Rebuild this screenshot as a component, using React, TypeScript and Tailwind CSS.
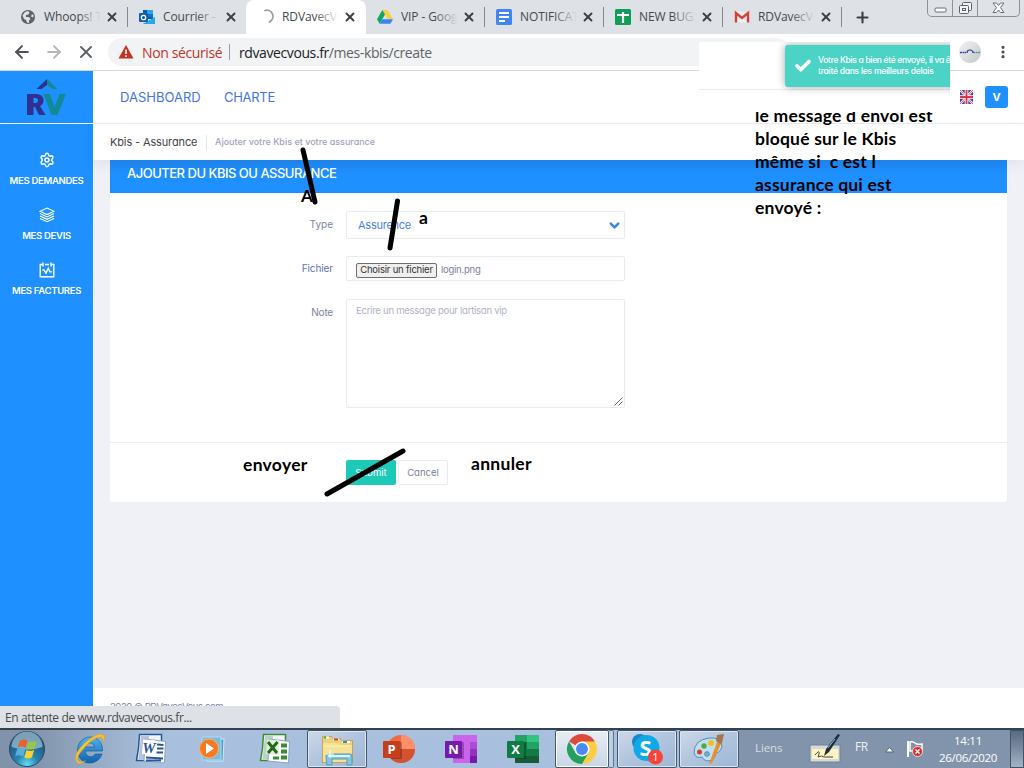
import React from "react";
import { Settings, X, Plus, ArrowLeft, ArrowRight, Check, ChevronDown, MoreVertical } from "lucide-react";

const GlobeIcon = () => (
  <svg width="16" height="16" viewBox="0 0 16 16">
    <circle cx="8" cy="8" r="7" fill="#5f6368" />
    <path d="M2.500 6.500 5 3l3-1 1.500 1.500-1 2L6 6v2h3l1.500 2-1.500 1.500V14l-2-.5-1-2.500-2-1zM12 5l1.700 1.500-.7 2-2-1z" fill="#dee1e6" />
  </svg>
);
const OutlookIcon = () => (
  <svg width="16" height="16" viewBox="0 0 16 16">
    <path d="M4 1h10v9H4z" fill="#0a5aa8" />
    <path d="M8 1h6v4H8z" fill="#28a8ea" />
    <path d="M9 5h5v3H9z" fill="#0078d4" />
    <path d="M4 15h12V8l-6 4z" fill="#1490df" />
    <path d="m4 15 12-7v7z" fill="#28a8ea" />
    <rect x="0" y="4" width="9" height="9" rx="1" fill="#0f5fb5" />
    <circle cx="4.5" cy="8.5" r="2.2" fill="none" stroke="#fff" strokeWidth="1.3" />
  </svg>
);
const SpinnerIcon = () => (
  <svg width="16" height="16" viewBox="0 0 16 16">
    <path d="M7 1.5A6.2 6.2 0 0 1 11.500 13" fill="none" stroke="#9aa0a6" strokeWidth="1.8" strokeLinecap="round" />
  </svg>
);
const DriveIcon = () => (
  <svg width="16" height="16" viewBox="0 0 16 16">
    <path d="M5.3 1h5.2L16 10.3h-5.2z" fill="#ffcd40" />
    <path d="M5.3 1 0 10.2l2.6 4.5L8 5.6z" fill="#11a861" />
    <path d="M5.2 10.3H16l-2.6 4.5H2.6z" fill="#3e82f1" />
  </svg>
);
const DocsIcon = () => (
  <svg width="16" height="16" viewBox="0 0 16 16">
    <rect width="16" height="16" rx="1.5" fill="#4285f4" />
    <path d="M3 4h10M3 8h10M3 12h6" stroke="#fff" strokeWidth="1.900" />
  </svg>
);
const SheetsIcon = () => (
  <svg width="16" height="16" viewBox="0 0 16 16">
    <rect width="16" height="16" rx="1.5" fill="#0f9d58" />
    <path d="M2 6h12M8 3v11" stroke="#fff" strokeWidth="2.2" />
  </svg>
);
const GmailIcon = () => (
  <svg width="16" height="16" viewBox="0 0 16 16">
    <rect x="1" y="2.5" width="14" height="11" rx="1" fill="#eceff1" />
    <path d="M2 13.5V4l6 5 6-5v9.5" fill="none" stroke="#d93f33" strokeWidth="2.4" />
  </svg>
);

type TabData = { icon: React.ReactNode; title: string; active?: boolean; sep?: boolean };
const tabs: TabData[] = [
  { icon: <GlobeIcon />, title: "Whoops! T", sep: true },
  { icon: <OutlookIcon />, title: "Courrier - d" },
  { icon: <SpinnerIcon />, title: "RDVavecVo", active: true },
  { icon: <DriveIcon />, title: "VIP - Goog", sep: true },
  { icon: <DocsIcon />, title: "NOTIFICATI", sep: true },
  { icon: <SheetsIcon />, title: "NEW BUGS", sep: true },
  { icon: <GmailIcon />, title: "RDVavecVo", sep: true },
];

function Tab({ icon, title, active, sep }: TabData) {
  const tone = active ? "mr-[-1px] w-[120px] bg-white rounded-t-lg" : "w-[119px]";
  const fade = active ? "to-white" : "to-[#dee1e6]";
  return (
    <div className={`flex h-[34px] shrink-0 items-center pl-3 ${tone}`}>
      <span className="w-6 shrink-0">{icon}</span>
      <span className="relative w-[57px] shrink-0 overflow-hidden text-[12px] tracking-[-0.1px] whitespace-nowrap text-[#45494d]">
        {title}
        <span className={`absolute inset-y-0 right-0 w-6 bg-linear-to-r from-transparent ${fade}`} />
      </span>
      <X className="ml-[4px] h-[14px] w-[14px] shrink-0 text-[#3c4043]" strokeWidth={3.2} />
      <span className={`mr-[-1px] ml-auto h-5 w-px ${sep ? "bg-[#85898e]" : ""}`} />
    </div>
  );
}

function WindowButtons() {
  return (
    <div className="absolute top-0 left-[927px] flex h-[17px] w-[93px] rounded-b-[5px] border border-t-0 border-[#8d9197] bg-[#dfe2e7]">
      <div className="flex w-[25px] items-center justify-center border-r border-[#8d9197]">
        <svg width="13" height="17"><rect x="1" y="8" width="11" height="4" rx="1" fill="#fff" stroke="#6b6f75" /></svg>
      </div>
      <div className="flex w-[25px] items-center justify-center border-r border-[#8d9197]">
        <svg width="15" height="17" fill="#f4f5f7" stroke="#5c6066">
          <rect x="4.5" y="2.5" width="9" height="8" rx="1" />
          <rect x="1.5" y="5.5" width="9" height="8" rx="1" />
          <rect x="4.5" y="8.5" width="3" height="2" />
        </svg>
      </div>
      <div className="flex flex-1 items-center justify-center">
        <svg width="13" height="17" viewBox="0 0 13 17">
          <path d="M1 3h3.5l2 2.5 2-2.5H12L8.5 7.7 12 12.5H8.500l-2-2.500-2 2.500H1l3.500-4.800z" fill="#fff" stroke="#6b6f75" />
        </svg>
      </div>
    </div>
  );
}

function Toolbar() {
  return (
    <div className="flex h-[37px] shrink-0 items-center border-b border-[#d5d7da] bg-white text-[#5f6368]">
      <ArrowLeft className="ml-[12px] h-5 w-5 text-[#4f5358]" strokeWidth={2.4} />
      <ArrowRight className="ml-[12px] h-5 w-5 text-[#b4b7ba]" strokeWidth={2.4} />
      <X className="ml-[12px] h-5 w-5 text-[#5f6368]" strokeWidth={2.3} />
      <div className="ml-[12px] flex h-7 w-[682px] items-center rounded-full bg-[#f1f3f4] pl-[10px] text-[14px] whitespace-nowrap">
        <svg width="16" height="14" viewBox="0 0 16 14">
          <path d="M8 0 15.500 13.500H.5z" fill="#c5321f" />
          <path d="M8 4.500v4.500M8 10.300v1.700" stroke="#fff" strokeWidth="1.600" />
        </svg>
        <span className="ml-[8px] w-[80px] tracking-[-0.38px] text-[#c5352b]">Non sécurisé</span>
        <span className="ml-[7px] h-4 w-px bg-[#9a9da1]" />
        <span className="ml-[9px] tracking-[-0.4px]"><span className="text-[#202124]">rdvavecvous.fr</span>/mes-kbis/create</span>
      </div>
      <div className="ml-auto flex h-[22px] w-[22px] items-center justify-center rounded-full bg-linear-to-br from-[#f3f3f4] to-[#c5c6c9]">
        <svg width="20" height="8"><path d="M0 4.500h6" stroke="#3f479b" strokeWidth="1.500" strokeDasharray="2 .5" /><path d="M13 4.500h7" stroke="#4a9caa" strokeWidth="1.500" strokeDasharray="2 .5" /><path d="M7 5q0-3 3-3t3 3" fill="none" stroke="#3a3f95" strokeWidth="1.200" /></svg>
      </div>
      <MoreVertical className="mr-[12px] ml-[13px] h-[16px] w-[18px] text-[#45494d]" strokeWidth={2.800} />
    </div>
  );
}

const Layers = () => (
  <svg width="16" height="16" viewBox="0 0 16 16" fill="none" stroke="#fff" strokeWidth="1.100">
    <path d="M8 1 15 4.300 8 7.600 1 4.300z" /><path d="m1 6.600 7 3.300 7-3.300M1 9l7 3.300L15 9M1 11.400l7 3.300 7-3.300" />
  </svg>
);
const Chart = () => (
  <svg width="16" height="16" viewBox="0 0 16 16" fill="none" stroke="#fff" strokeWidth="1.400">
    <path d="M4 2.500H1.200v12.300h13.600V2.500H12M6 2.500h4M4 .5v4M12 .5v4M3.500 8H5l2 3.300 2.300-5 1.500 3.500h2" />
  </svg>
);
const menu = [
  { icon: <Settings className="h-4 w-4" strokeWidth={2.2} />, label: "MES DEMANDES" },
  { icon: <Layers />, label: "MES DEVIS" },
  { icon: <Chart />, label: "MES FACTURES" },
];

function Sidebar() {
  return (
    <aside className="w-[93px] shrink-0 bg-[#1e90ff] text-white">
      <div className="flex h-[53px] items-center justify-center border-b border-[#e8f3ff]">
        <svg width="42" height="40" viewBox="0 0 42 40">
          <path d="M21 2v6L15.500 12H10.500z" fill="#2e3192" />
          <path d="M21 2v6L26.500 12h5z" fill="#128a96" />
          <path fillRule="evenodd" d="M1 17h9q7.500 0 7.500 6.500 0 4-3.500 5.500l5.500 9H13l-4-8H7.500v8H1zM7.500 21v5H9.500q2.500 0 2.500-2.500T9.500 21z" fill="#2e3192" />
          <path d="M17.500 17H24l4.500 13L33.500 17h6.500l-8.500 21h-6z" fill="#128a96" />
        </svg>
      </div>
      <nav className="flex flex-col gap-[17px] pt-[28px]">
        {menu.map((m) => (
          <div key={m.label} className="flex h-[38px] flex-col items-center gap-[5px]">
            {m.icon}
            <span className="text-[9.500px] leading-[15px] font-semibold tracking-[-0.3px] whitespace-nowrap">{m.label}</span>
          </div>
        ))}
      </nav>
    </aside>
  );
}

function FormCard() {
  return (
    <section className="mx-[17px] h-[342px] rounded-b-[3px] bg-white text-[10px] text-[#7b829f]">
      <h1 className="flex h-[33px] items-center bg-linear-to-b from-[#1c87f0] to-[#1e90ff] to-40% pb-[6px] pl-[17px] text-[13px] font-medium tracking-[-0.5px] text-white">
        AJOUTER DU KBIS OU ASSURANCE
      </h1>
      <div className="grid h-[250px] grid-cols-[223px_279px] content-start gap-x-[13px] border-b border-[#ebedf2] pt-[18px]">
        <label className="pt-[6px] text-right">Type</label>
        <div className="mb-[17px] flex h-[28px] items-center justify-between rounded-[2px] border border-[#e9eaf2] pr-[2px] pl-[11px] text-[11px] tracking-[-0.25px] text-[#4a7ff2]">
          Assurence
          <ChevronDown className="h-[15px] w-[15px] text-[#3c80f2]" strokeWidth={4} />
        </div>
        <label className="pt-[5px] text-right tracking-[-0.1px] text-[#5f74b5]">Fichier</label>
        <div className="mb-[18px] flex h-[25px] items-center rounded-[2px] border border-[#e9eaf2] pt-[3px] pl-[9px] text-[9.500px]">
          <button className="mr-[4px] h-[15px] w-[81px] rounded-[2px] border border-[#6f6f6f] bg-[#efefef] leading-[12px] tracking-[-0.2px] whitespace-nowrap text-[#333]">Choisir un fichier</button>
          <span className="tracking-[-0.25px]">login.png</span>
        </div>
        <label className="pt-[6px] text-right tracking-[-0.2px]">Note</label>
        <div className="relative h-[109px] rounded-[2px] border border-[#e9eaf2] pt-[4px] pl-[9px] text-[9.500px] tracking-[-0.250px] text-[#b0b2c8]">
          Ecrire un message pour lartisan vip
          <svg className="absolute right-[1px] bottom-[1px]" width="9" height="9" stroke="#666"><path d="M.5 8.500l8-8M4.500 8.500l4-4" /></svg>
        </div>
      </div>
      <div className="flex gap-[2px] pt-[17px] pl-[236px]">
        <button className="h-[25px] w-[50px] rounded-[2px] bg-[#1dc9b7] pt-px text-[9.500px] text-white">Submit</button>
        <button className="h-[25px] w-[50px] rounded-[2px] border border-[#e9eaf2] pt-px text-[9.500px] text-[#7b829f]">Cancel</button>
      </div>
    </section>
  );
}

const Flag = () => (
  <svg width="13" height="14" viewBox="0 0 13 14">
    <rect width="13" height="14" rx="1.500" fill="#3a4796" />
    <path d="M0 0l13 14M13 0 0 14" stroke="#fff" strokeWidth="2.200" /><path d="M0 0l13 14M13 0 0 14" stroke="#e2405a" strokeWidth=".9" />
    <path d="M6.500 0v14M0 7h13" stroke="#fff" strokeWidth="3.600" /><path d="M6.500 0v14M0 7h13" stroke="#e2314a" strokeWidth="1.900" />
  </svg>
);

function OfficeIcon({ letter, dark, mid, light, round }: { letter: string; dark: string; mid: string; light: string; round?: boolean }) {
  return (
    <svg width="34" height="30" viewBox="0 0 34 30">
      {round ? (
        <><circle cx="19" cy="15" r="14" fill={mid} /><path d="M19 1a14 14 0 0 1 14 14H19z" fill={light} /><path d="M5 15h28a14 14 0 0 1-28 0z" fill="#d35230" /></>
      ) : (
        <>
          <path d="M9 1h24v28H9z" fill={mid} />
          {letter === "N" ? (
            <><path d="M26 8h7v7h-7z" fill="#ae4bd5" /><path d="M26 15h7v7h-7z" fill="#9332bf" /><path d="M26 22h7v7h-7z" fill="#7719aa" /></>
          ) : (
            <><path d="M21 1h12v7H21z" fill={light} /><path d="M21 8h12v7H21z" fill="#21a366" /><path d="M9 8h12v7H9z" fill="#107c41" /><path d="M9 15h24v7H9z" fill="#107c41" /><path d="M9 22h24v7H9z" fill="#185c37" /></>
          )}
        </>
      )}
      <path d="M9 8h11v17H9z" fill="#000" opacity=".25" />
      <rect x="1" y="7" width="17" height="17" rx="1" fill={dark} />
      <text x="9.500" y="20" textAnchor="middle" fontSize="13" fontWeight="700" fill="#fff" fontFamily="Open Sans, sans-serif">{letter}</text>
    </svg>
  );
}

const StartOrb = () => (
  <svg width="38" height="38" viewBox="0 0 38 38">
    <defs><radialGradient id="orb" cx=".5" cy=".95" r=".8"><stop offset="0" stopColor="#5fe3f5" /><stop offset=".4" stopColor="#2783ae" /><stop offset="1" stopColor="#235277" /></radialGradient></defs>
    <circle cx="19" cy="19" r="17.500" fill="url(#orb)" stroke="#234966" />
    <path d="M3.500 17A15.500 15.500 0 0 1 34.500 17Q19 22 3.500 17z" fill="#d8edf8" opacity=".5" />
    <path d="M12 10.500q3.500-2 7.500.2l-2 7.300q-4-2.500-8-.5z" fill="#e8622c" /><path d="M20.700 11.200q4 2 8-.4l-2.200 7.500q-4 2.500-7.800.2z" fill="#9bc645" />
    <path d="M9.200 18.900q4-2 8 .5l-2 7.200q-4-2.500-8-.5z" fill="#5aaede" /><path d="M18.400 19.900q4 2.300 7.800-.1L24 27.200q-4 2.500-7.800.1z" fill="#fbd035" />
  </svg>
);
const IeIcon = () => (
  <svg width="34" height="32" viewBox="0 0 34 32">
    <defs><linearGradient id="ie" x2="0" y2="1"><stop stopColor="#4fb4ee" /><stop offset="1" stopColor="#1161ab" /></linearGradient></defs>
    <path fillRule="evenodd" d="M17 4c8 0 13 6 12.500 14H12.500c0 7 8 7 9.500 3h7c-2 6-7 9-12.500 9C9 30 4.500 24 4.500 17S10 4 17 4zm-4.500 10h9c-.5-5.500-8-5.500-9 0z" fill="url(#ie)" stroke="#0e5595" strokeWidth=".6" />
    <path d="M4.500 30Q-2 23 12 9.500 27-2.500 31 2.500q2 2.500-1 7.500 1-5.500-2.500-6Q21 4 11.500 14.500 1 26 6 28.500q2.500 1 7-1-5.500 4.500-8.500 2.500z" fill="#f5c32b" stroke="#d79a16" strokeWidth=".4" />
  </svg>
);
const OldOffice = ({ letter, color }: { letter: string; color: string }) => (
  <svg width="32" height="32" viewBox="0 0 32 32">
    <path d="M4.500 1.500h22v26H1.500q2.500-12 3-26z" fill="#eef4fa" stroke={color} strokeWidth="1.500" />
    <path d="M6 3h8l-2 23H3.500z" fill={color} opacity=".3" />
    <path d="m10 6 20.500 2.500-1 21.500L9 28z" fill="#fff" stroke="#8da6c1" />
    {letter === "X" ? (
      <path d="M22 10.500h6v4h-6zM22 16.500h6v4h-6zM22 22.500h6v4h-6zM14 23.500h6v3h-6z" fill={color} />
    ) : (
      <path d="M22 11.500l6.500.5M22 15.500h6.500M21.500 19.500H28M11 24.500l17 1M11 27.500h15" stroke={color} strokeWidth="1.800" />
    )}
    <path d="m8 6.500 12.500 1-.5 14.500-13-1z" fill={letter === "W" ? "#fff" : "#dff0d8"} />
    {letter === "X" ? (
      <path d="m9 9 9 11M18.500 9 9 20" stroke="#23691f" strokeWidth="3" />
    ) : (
      <text x="14" y="20" textAnchor="middle" fontSize="15" fontStyle="italic" fontWeight="700" fill={color} fontFamily="Liberation Serif, serif">{letter}</text>
    )}
  </svg>
);
const MediaIcon = () => (
  <svg width="30" height="30" viewBox="0 0 30 30">
    <path d="M10 5h17l-1 22H10z" fill="#4d9dcc" stroke="#d3ebf8" /><path d="M5 3h19v23H5z" fill="#79bde0" stroke="#b3dcf2" />
    <circle cx="12" cy="14.500" r="9.500" fill="#f47920" stroke="#ffb271" /><path d="m9 9 8 5.500L9 20z" fill="#fff" />
  </svg>
);
const FolderIcon = () => (
  <svg width="36" height="34" viewBox="0 0 36 34">
    <path d="M3.500 4.500h9l1 2h8l1 2h11v22h-30z" fill="#ecd27b" stroke="#c09d43" strokeWidth=".8" />
    <path d="M5 5.500h5M14 7.500h6M23 10h8" stroke="#fff8e6" strokeWidth="2" />
    <path d="M5 5.500h2" stroke="#21a83a" strokeWidth="2" /><path d="M15 7.500h4" stroke="#c9432b" strokeWidth="2" /><path d="M24 10h4" stroke="#2992ca" strokeWidth="2" />
    <path d="M4 11h16l1 2h12v17H4z" fill="#f6e294" /><path d="M5 14h26" stroke="#fdf1bd" />
    <path d="M8 22h23q2 0 2 2v9h-5v-6H13v6H8q-1-5-1-9z" fill="#86c5df" stroke="#4d9fbe" /><path d="M9 23h22v2H9z" fill="#dcf5fd" />
    <path d="M11 18v8M7 22h8" stroke="#fff" strokeWidth="1" />
  </svg>
);
const ChromeIcon = () => (
  <svg width="32" height="32" viewBox="0 0 32 32">
    <path d="M16 16 3 8.500A15 15 0 0 1 29 8.500z" fill="#dc4a3e" /><path d="M16 8.500h13A15 15 0 0 1 16 31l6.500-11.300z" fill="#ffcd41" />
    <path d="M3 8.500A15 15 0 0 0 16 31l6.500-11.300-13 0z" fill="#22a05c" /><circle cx="16" cy="16" r="7.500" fill="#fff" /><circle cx="16" cy="16" r="6" fill="#4a8af4" />
  </svg>
);
const SkypeIcon = () => (
  <svg width="34" height="34" viewBox="0 0 34 34">
    <circle cx="10" cy="10" r="8" fill="#1a86c8" /><circle cx="22" cy="22" r="8" fill="#078cd0" /><circle cx="16.500" cy="16" r="13" fill="#10a9e7" />
    <text x="15.500" y="24" textAnchor="middle" fontSize="22" fontWeight="700" fill="#fff" fontFamily="Open Sans, sans-serif">S</text>
    <circle cx="25.500" cy="25" r="7.500" fill="#f6443a" /><text x="25.500" y="29" textAnchor="middle" fontSize="11" fill="#fff" fontFamily="Open Sans, sans-serif">1</text>
  </svg>
);
const PaintIcon = () => (
  <svg width="34" height="34" viewBox="0 0 34 34">
    <path d="M2 21Q2 8 17 6q12-1 13 8-1 6-6 7-1 8-9 8-4-1-5-4-6 2-8-4z" fill="#c0dff1" stroke="#4a8fb8" />
    <circle cx="7.500" cy="20" r="2.500" fill="#d63c33" /><circle cx="12" cy="14" r="2.700" fill="#54a83c" /><circle cx="19" cy="11" r="3" fill="#f6bc21" /><circle cx="15" cy="22" r="2.300" fill="#84b0d0" stroke="#4788b3" />
    <path d="m17 32 8-22 4 2-9 19z" fill="#ed8e2d" /><path d="m24 9 1-6 7-1-2 9-2 1z" fill="#a5754d" />
  </svg>
);
const openCell = "border border-[#46586e] bg-linear-to-br from-[#cdd9e8] via-[#b0c4de] to-[#9eb7d6] shadow-[inset_0_0_0_1px_#dbe5f1] rounded-[2px]";

function Taskbar() {
  return (
    <footer className="flex h-10 shrink-0 items-center border-t-2 border-[#33404e] bg-linear-to-r from-[#8193aa] from-3% via-[#a8c0dd] via-15% to-[#a8c0dd]">
      <div className="flex w-[60px] items-center pl-[8px]"><StartOrb /></div>
      <div className="flex w-[60px] justify-center"><IeIcon /></div>
      <div className="flex w-[62px] justify-center"><OldOffice letter="W" color="#2a5699" /></div>
      <div className="flex w-[60px] justify-center"><MediaIcon /></div>
      <div className="flex w-[65px] justify-center"><OldOffice letter="X" color="#3d8b37" /></div>
      <div className={`flex h-[38px] w-[60px] items-center justify-center ${openCell}`}><FolderIcon /></div>
      <div className="flex w-[63px] justify-center"><OfficeIcon letter="P" dark="#c43e1c" mid="#ed6c47" light="#ff8f6b" round /></div>
      <div className="flex w-[62px] justify-center"><OfficeIcon letter="N" dark="#7719aa" mid="#ca64ea" light="#ca64ea" /></div>
      <div className="flex w-[62px] justify-center"><OfficeIcon letter="X" dark="#107c41" mid="#21a366" light="#33c481" /></div>
      <div className="ml-[1px] flex h-[38px] w-[54px] items-center justify-center rounded-[2px] border border-[#46586e] bg-linear-to-b from-[#e8edf4] to-[#c8d6e7] shadow-[inset_0_0_0_1px_#fff]"><ChromeIcon /></div>
      <div className="h-[38px] w-[5px] rounded-r-[2px] border border-l-0 border-[#60748c] bg-[#bfcfe2]" />
      <div className={`ml-[3px] flex h-[38px] w-[60px] items-center justify-center ${openCell}`}><SkypeIcon /></div>
      <div className={`ml-[2px] flex h-[38px] w-[60px] items-center justify-center ${openCell}`}><PaintIcon /></div>
      <div className="flex h-[38px] flex-1 items-center bg-[#8294ab] text-[12px] text-[#edf1f5]">
        <span className="ml-[16px] w-[54px] pb-[2px] text-[11.500px] tracking-[-0.1px] text-[#d7dde4]">Liens</span>
        <svg width="34" height="32" viewBox="0 0 34 32">
          <path d="M1 12h30v17H1z" fill="#d5d9dc" stroke="#73828e" /><path d="M3 16h26v10H3z" fill="#fdf5bd" /><path d="M6 22q5-6 4-1l-1 3q4-2 6 0h9" fill="none" stroke="#4b4057" />
          <path d="m15 23 2-7L29 1l2 1-11 17z" fill="#1c2d3a" /><path d="m19 15 7-9" stroke="#8cb9c9" />
        </svg>
        <span className="mb-[5px] ml-[12px] w-[15px] tracking-[-0.5px]">FR</span>
        <svg className="ml-[15px]" width="9" height="7"><path d="M.5 6 4.500 1.500 8.500 6z" fill="#fff" stroke="#4e6278" /></svg>
        <svg className="ml-[12px]" width="18" height="18" viewBox="0 0 18 18">
          <path d="M2 1v16" stroke="#fff" strokeWidth="2" /><path d="M4 2q3-1 5 1t7 1v7H4z" fill="#8294ab" stroke="#fff" strokeWidth="1.500" />
          <circle cx="11.500" cy="11.500" r="5" fill="#da2e2e" stroke="#fff" strokeWidth=".7" /><path d="m9.500 9.500 4 4m0-4-4 4" stroke="#fff" strokeWidth="1.500" />
        </svg>
        <div className="ml-[14px] w-[60px] text-center text-[11.500px] leading-[17px] tracking-[-0.3px] text-white">14:11<br />26/06/2020</div>
        <div className="ml-auto h-[38px] w-[14px] border border-[#43546a] bg-linear-to-b from-[#596a7e] via-[#7d8da1] to-[#a3b3c6]" />
      </div>
    </footer>
  );
}

const note = "absolute whitespace-nowrap font-[Lato,sans-serif] font-bold text-black";

export default function App() {
  return (
    <div className="relative flex h-[768px] w-[1024px] flex-col overflow-hidden bg-white font-['Open_Sans',sans-serif]">
      <header className="flex h-[34px] shrink-0 items-center bg-[#dee1e6] pl-[8px]">
        {tabs.map((t, i) => <Tab key={i} {...t} />)}
        <Plus className="ml-[13px] h-[17px] w-[17px] text-[#3c4043]" strokeWidth={3} />
        <WindowButtons />
      </header>
      <Toolbar />
      <main className="flex min-h-0 flex-1 font-[Inter,sans-serif] [font-feature-settings:'cv11']">
        <Sidebar />
        <div className="flex flex-1 flex-col bg-[#f0f1f7]">
          <div className="flex h-[53px] shrink-0 items-center border-b border-[#ebecf1] bg-white pr-[16px] pl-[27px] text-[13px] text-[#4474e8]">
            <span className="w-[104px] pt-[2px]">DASHBOARD</span>
            <span className="pt-[2px] tracking-[-0.3px]">CHARTE</span>
            <span className="ml-auto"><Flag /></span>
            <span className="ml-[12px] flex h-[22px] w-[23px] items-center justify-center rounded-[3px] bg-[#1e90ff] text-[11px] font-bold text-white">V</span>
          </div>
          <div className="relative flex h-[36px] shrink-0 items-center bg-white pl-[17px] shadow-[0_5px_12px_rgba(80,70,110,0.08)]">
            <span className="w-[96px] text-[11px] tracking-[-0.13px] text-[#434349]">Kbis - Assurance</span>
            <span className="h-[15px] w-px bg-[#e2e5ec]" />
            <span className="ml-[8px] text-[9px] font-medium text-[#a0a3ba]">Ajouter votre Kbis et votre assurance</span>
          </div>
          <FormCard />
          <div className="mt-auto h-[40px] bg-white pt-[12px] pl-[17px] text-[9.500px] leading-[14px] tracking-[-0.42px] text-[#7b829f]">2020 © RDVavecVous.com</div>
        </div>
      </main>
      <Taskbar />
      <div className="absolute top-[706px] left-0 flex h-[22px] w-[340px] items-center rounded-tr-[4px] bg-[#dee1e6] pt-[2px] pl-[5px] text-[12px] tracking-[-0.38px] text-[#45494d]">
        En attente de www.rdvavecvous.fr...
      </div>

      <p className={`${note} top-[104px] left-[755px] text-[17.500px] leading-[23px] tracking-[0.2px] whitespace-pre`}>
        {"le message d envoi est\nbloqué sur le Kbis\nmême si  c est l\nassurance qui est\nenvoyé :"}
      </p>
      <div className="absolute top-[42px] left-[699px] h-[70px] w-[251px] overflow-hidden bg-white font-[Inter,sans-serif] [font-feature-settings:'cv11']">
        <div className="h-[48px] border-b border-[#ececf0]" />
        <div className="absolute top-[3px] left-[86px] flex h-[42px] w-[190px] items-center rounded-[3px] bg-[#4bd3c5] pl-[9px] text-[8.500px] leading-[11px] font-medium tracking-[-0.25px] whitespace-nowrap text-white shadow-[0_0_8px_rgba(0,0,0,0.35)]">
          <Check className="mr-[6px] h-[18px] w-[18px]" strokeWidth={5} />
          <span><span className="tracking-[-0.32px]">Votre Kbis a bien été envoyé, il va être</span><br />traité dans les meilleurs delais</span>
        </div>
      </div>
      <span className={`${note} top-[183px] left-[301px] text-[17px]`}>A</span>
      <span className={`${note} top-[205px] left-[419px] text-[17.500px]`}>a</span>
      <span className={`${note} top-[452px] left-[243px] text-[17.500px] tracking-[0.3px]`}>envoyer</span>
      <span className={`${note} top-[451px] left-[471px] text-[17.500px] tracking-[0.3px]`}>annuler</span>
      <svg className="absolute inset-0" width="1024" height="768" stroke="#000" strokeWidth="5" strokeLinecap="round">
        <path d="m303 150 12 52M397.500 201l-7.500 47M327 494l76-43" />
      </svg>
    </div>
  );
}
